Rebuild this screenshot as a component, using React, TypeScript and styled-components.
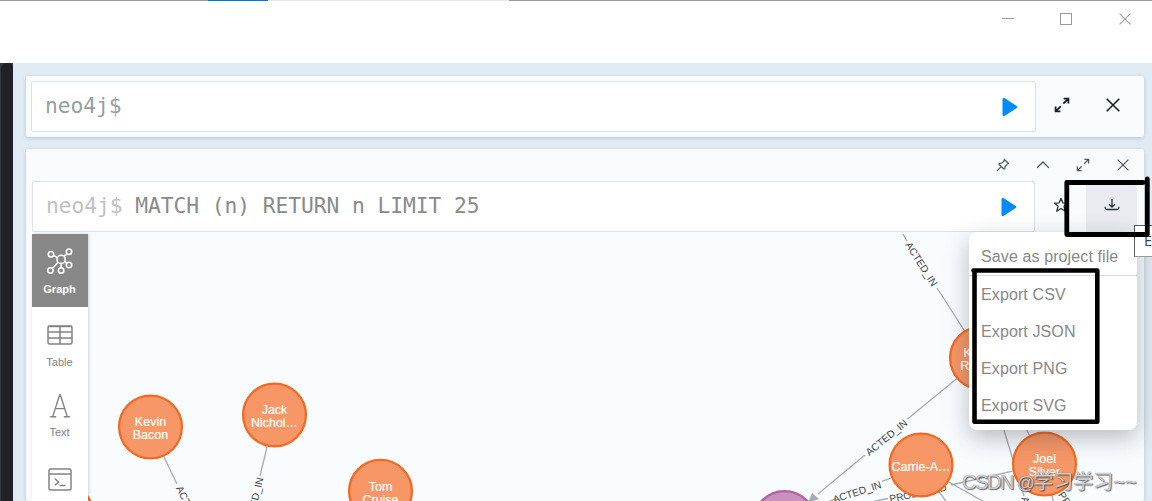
import React from "react";
import styled, { createGlobalStyle, css } from "styled-components";

const GlobalStyle = createGlobalStyle`
  * { box-sizing: border-box; }
  html, body { margin: 0; padding: 0; overflow: hidden; }
  body { font-family: "Liberation Sans", Arial, sans-serif; background: #fff; }
  svg { display: block; flex: none; }
`;

const Window = styled.div`
  position: relative;
  display: flex;
  flex-direction: column;
  width: 1152px;
  height: 501px;
  overflow: hidden;
  background: #fff;
`;

const TopEdge = styled.div`
  display: flex;
  flex: none;
  height: 1px;
`;

const EdgeSegment = styled.div<{ $width: number; $color: string }>`
  width: ${(p) => p.$width}px;
  background: ${(p) => p.$color};
`;

const TitleBar = styled.header`
  display: flex;
  flex: none;
  justify-content: flex-end;
  height: 62px;
  margin-right: -2px;
`;

const WindowButton = styled.button`
  display: flex;
  flex: none;
  align-items: center;
  justify-content: center;
  width: 58px;
  height: 36px;
  padding: 0;
  border: 0;
  background: none;
  color: #999;

  &:not(:last-child) {
    position: relative;
    left: -1px;
  }
`;

const Body = styled.div`
  display: flex;
  flex: 1;
  min-height: 0;
`;

const Rail = styled.div`
  flex: none;
  width: 13px;
  background: #33373d;
  padding-left: 1px;
`;

const RailInner = styled.div`
  height: 100%;
  background: #212227;
  border-radius: 6px 5px 0 0;
`;

const Main = styled.main`
  display: flex;
  flex: 1;
  flex-direction: column;
  gap: 12px;
  min-width: 0;
  padding: 13px 8px 0 13px;
  background: #e1ebf4;
`;

const card = css`
  background: #f8fcff;
  border-radius: 2px;
  box-shadow: 0 1px 4px rgba(0, 0, 0, 0.17);
`;

const EditorCard = styled.section`
  ${card}
  display: flex;
  flex: none;
  height: 61px;
  padding: 5px 0 5px 5px;
`;

const ResultCard = styled.section`
  ${card}
  display: flex;
  flex: 1;
  flex-direction: column;
  min-height: 0;
`;

const EditorBox = styled.div<{ $width: number }>`
  display: flex;
  flex: none;
  align-items: center;
  justify-content: space-between;
  width: ${(p) => p.$width}px;
  height: 51px;
  padding: 0 17px 0 13px;
  border: 1px solid #d8e3ec;
  border-radius: 2px;
  background: #fff;
`;

const Query = styled.div<{ $muted?: boolean }>`
  font: 21.3px/24px "DejaVu Sans Mono", monospace;
  letter-spacing: -0.07px;
  white-space: pre;
  margin-top: -1px;
  color: ${(p) => (p.$muted ? "#95a0a0" : "#8a8a8a")};
`;

const Prompt = styled.span`
  color: #bfc1c2;
`;

const ToolButton = styled.button<{ $active?: boolean; $strong?: boolean }>`
  display: flex;
  flex: none;
  align-items: center;
  justify-content: center;
  width: 51px;
  height: 47px;
  padding: 0;
  border: 0;
  background: ${(p) => (p.$active ? "#eaebf0" : "none")};
  color: ${(p) => (p.$strong ? "#14202b" : "#26333f")};
`;

const FrameHeader = styled.div`
  display: flex;
  flex: none;
  justify-content: flex-end;
  height: 32px;
  padding-right: 1.5px;
`;

const HeaderButton = styled(ToolButton)`
  width: 40px;
  height: 32px;
  color: #4b5965;
`;

const QueryRow = styled.div`
  display: flex;
  flex: none;
  height: 53px;
  padding-left: 6px;
`;

const DownloadSlot = styled.div`
  position: relative;
  padding-top: 4px;
  height: 51px;
`;

const DownloadButton = styled(ToolButton)`
  padding-bottom: 8px;
`;

const Menu = styled.div`
  position: absolute;
  z-index: 3;
  top: 51px;
  right: 0;
  display: flex;
  flex-direction: column;
  width: 168px;
  height: 198px;
  padding-top: 6px;
  border-radius: 8px;
  background: #fff;
  box-shadow: 0 8px 24px rgba(30, 35, 45, 0.3);
`;

const MenuItem = styled.div`
  height: 37px;
  padding-left: 12px;
  font-size: 16px;
  letter-spacing: 0.11px;
  line-height: 37px;
  white-space: nowrap;
  color: #888;
`;

const Divider = styled.div`
  flex: none;
  height: 1px;
  background: #d5dcea;
`;

const FrameBody = styled.div`
  display: flex;
  flex: 1;
  min-height: 0;
  padding-left: 6px;
`;

const Sidebar = styled.nav`
  z-index: 1;
  display: flex;
  flex: none;
  flex-direction: column;
  width: 56px;
  background: #fff;
  box-shadow: 1px 0 3px rgba(0, 0, 0, 0.17);
  overflow: hidden;
`;

const ViewButton = styled.div<{ $active?: boolean; $height: number; $top: number; $gap: number }>`
  display: flex;
  flex: none;
  flex-direction: column;
  align-items: center;
  gap: ${(p) => p.$gap}px;
  height: ${(p) => p.$height}px;
  padding-top: ${(p) => p.$top}px;
  padding-right: 1px;
  background: ${(p) => (p.$active ? "#888" : "#fff")};
  color: ${(p) => (p.$active ? "#fff" : "#828282")};
  font-size: 11px;
  font-weight: ${(p) => (p.$active ? 700 : 400)};
  line-height: 12px;
`;

const GraphPane = styled.div`
  flex: 1;
  min-width: 0;
  overflow: hidden;

  text {
    font-family: "Liberation Sans", Arial, sans-serif;
    text-anchor: middle;
  }
`;

const Tooltip = styled.div`
  position: absolute;
  z-index: 4;
  left: 1134px;
  top: 225px;
  width: 60px;
  height: 32px;
  padding-left: 9px;
  border: 1px solid #5a5a5a;
  border-bottom-color: #999;
  background: #fff;
  color: #3b3b68;
  font: 14.5px/30px "Open Sans", sans-serif;
`;

const Marks = styled.svg`
  position: absolute;
  z-index: 5;
  left: 0;
  top: 0;
  pointer-events: none;
`;

const Watermark = styled.div`
  position: absolute;
  z-index: 6;
  left: 962px;
  top: 470px;
  font: 20px/24px "Liberation Sans", "Noto Sans CJK SC", sans-serif;
  white-space: pre;
  color: rgba(225, 225, 225, 0.85);
  text-shadow: 1px 1px 1px rgba(60, 60, 60, 0.75), 0 0 1px rgba(70, 70, 70, 0.8);
`;

const WatermarkLatin = styled.span`
  letter-spacing: -1.45px;
`;

const WatermarkAt = styled.span`
  font-size: 17.5px;
  letter-spacing: -1.5px;
`;

const Play = () => (
  <svg width="16" height="20" viewBox="0 0 16 20">
    <path d="M1.8 2.2 14 10 1.8 17.8z" fill="#018bff" stroke="#018bff" strokeWidth="2.6" strokeLinejoin="round" />
  </svg>
);

const Expand = ({ weight = 1.4, size = 16 }: { weight?: number; size?: number }) => (
  <svg width={size} height={size} viewBox="0 0 16 16" fill="none" stroke="currentColor" strokeWidth={weight}>
    <path d="M9.3 6.7 14.2 1.8M9.6 1.6h4.8V6.4M6.7 9.3 1.8 14.2M1.6 9.6v4.8H6.4" />
  </svg>
);

const Cross = ({ size = 14, weight = 1.5 }: { size?: number; weight?: number }) => (
  <svg width={size} height={size} viewBox="0 0 14 14" fill="none" stroke="currentColor" strokeWidth={weight}>
    <path d="M.7.7 13.3 13.3M13.3.7.7 13.3" />
  </svg>
);

const Pin = () => (
  <svg width="14" height="14" viewBox="0 0 14 14" fill="none" stroke="currentColor" strokeWidth="1.2" strokeLinejoin="round">
    <path d="M8.4 1.5 12.6 5.5 11.1 6.1 9.2 8.4 8.8 10.8 7.9 11 3 6.2 3.4 5.3 5.8 5.1 8 3ZM5.2 8.6 1 12.8" />
  </svg>
);

const Chevron = () => (
  <svg width="14" height="10" viewBox="0 0 14 10" fill="none" stroke="currentColor" strokeWidth="1.3">
    <path d="M1.2 7.8 7 2l5.8 5.8" />
  </svg>
);

const Star = () => (
  <svg width="16" height="16" viewBox="0 0 16 16" fill="none" stroke="currentColor" strokeWidth="1.3" strokeLinejoin="round">
    <path d="m8 1.3 1.9 4.6 4.8.2-3.8 3.1 1.3 5L8 11.5l-4.2 2.7 1.3-5-3.8-3.1 4.8-.2z" />
  </svg>
);

const Download = () => (
  <svg width="16" height="14" viewBox="0 0 16 14" fill="none" stroke="currentColor" strokeWidth="1.3">
    <path d="M8 1v8M5 6.2l3 3 3-3M1.2 8.7v1.1q0 1.7 1.7 1.7h10.2q1.7 0 1.7-1.7V8.7" />
  </svg>
);

const GraphIcon = () => (
  <svg width="26" height="26" viewBox="0 0 26 26" fill="none" stroke="currentColor" strokeWidth="1.6">
    <circle cx="14.1" cy="11.4" r="4.1" />
    <circle cx="4" cy="6.2" r="2.7" />
    <circle cx="22" cy="3.7" r="2.7" />
    <circle cx="22" cy="17" r="2.7" />
    <circle cx="14.1" cy="22.4" r="2.7" />
    <circle cx="3.4" cy="22.4" r="2.7" />
    <path d="m6.4 7.4 4 2.2M17 8.4l3-2.8M17.7 13.4l2.1 2.1M14.1 15.5v4.2M11.2 14.3l-6 6.2" />
  </svg>
);

const TableIcon = () => (
  <svg width="26" height="20" viewBox="0 0 26 20" fill="none" stroke="currentColor" strokeWidth="1.5">
    <rect x="1" y="1" width="24" height="18" rx="1.5" />
    <path d="M1 7h24M1 13h24M13 1v18M1 1.6h24" />
  </svg>
);

const TextIcon = () => (
  <svg width="22" height="24" viewBox="0 0 22 24" fill="none" stroke="currentColor" strokeWidth="1.4">
    <path d="M3.7 22.6 10.6 1h.8l6.9 21.6M6.3 14.6h9.4M1.2 22.7h6M14.8 22.7h6" />
  </svg>
);

const CodeIcon = () => (
  <svg width="24" height="23" viewBox="0 0 24 23" fill="none" stroke="currentColor" strokeWidth="1.5">
    <rect x="1" y="1" width="22" height="21" rx="1.5" />
    <path d="M1 6h22M6.8 10.7l3.8 3.3-3.8 3.3M11.5 17.5h6" />
  </svg>
);

type NodeProps = { x: number; y: number; lines: string[]; purple?: boolean };

const GraphNode = ({ x, y, lines, purple }: NodeProps) => (
  <g>
    <circle
      cx={x}
      cy={y}
      r={31.4}
      fill={purple ? "#c990c0" : "#f79767"}
      stroke={purple ? "#b261a5" : "#f36924"}
      strokeWidth="2.3"
    />
    {lines.map((line, i) => (
      <text
        key={line}
        x={x}
        y={y + 5.8 + (i - (lines.length - 1) / 2) * 13}
        fontSize="12.5"
        fill="#fff"
        stroke="#fff"
        strokeWidth="0.2"
      >
        {line}
      </text>
    ))}
  </g>
);

type EdgeLabelProps = { x: number; y: number; angle: number; children: string };

const EdgeLabel = ({ x, y, angle, children }: EdgeLabelProps) => (
  <text transform={`translate(${x} ${y}) rotate(${angle})`} y="3.6" fontSize="10.2" fill="#3f4448">
    {children}
  </text>
);

const Graph = () => (
  <svg width="1056" height="267" viewBox="88 234 1056 267">
    <g stroke="#a5abb6" strokeWidth="1.3">
      <path d="M903 234l4 7M937 288l45 70" />
      <path d="M982 358 907.5 419M865 455l-47 39" />
      <path d="M164 457l13 27M267 447l-7 29" />
      <path d="M891 478l-9 3.3M830 501l6-2.4" />
      <path d="M1044 464 951 485M888 498.5l-14 3" />
      <path d="M949 482l37 21M937 489l11 15" />
      <path d="M982 358l42 138M990 358l54 106M1044 464l10 40" />
    </g>
    <path d="M808 503l4-10 7 6z" fill="#a5abb6" />
    <EdgeLabel x={921.5} y={264} angle={57.5}>ACTED_IN</EdgeLabel>
    <EdgeLabel x={886.5} y={437.5} angle={-39.5}>ACTED_IN</EdgeLabel>
    <EdgeLabel x={857} y={492} angle={-18}>ACTED_IN</EdgeLabel>
    <EdgeLabel x={918} y={493} angle={-12}>PRODUCED</EdgeLabel>
    <EdgeLabel x={190} y={509} angle={64}>ACTED_IN</EdgeLabel>
    <EdgeLabel x={254} y={502} angle={-76}>ACTED_IN</EdgeLabel>
    <EdgeLabel x={1032} y={521} angle={73}>ACTED_IN</EdgeLabel>
    <EdgeLabel x={1077} y={517} angle={56}>PRODUCED</EdgeLabel>
    <GraphNode x={62} y={515} lines={[]} />
    <GraphNode x={150.5} y={427} lines={["Kevin", "Bacon"]} />
    <GraphNode x={274.5} y={415} lines={["Jack", "Nichol…"]} />
    <GraphNode x={380.5} y={491.3} lines={["Tom", "Cruise"]} />
    <GraphNode x={981.5} y={358} lines={["Keanu", "Reeves"]} />
    <GraphNode x={784.5} y={522.5} lines={[]} purple />
    <GraphNode x={921} y={465} lines={["Carrie-A…"]} />
    <GraphNode x={1044.5} y={464} lines={["Joel", "Silver"]} />
  </svg>
);

const exportFormats = ["CSV", "JSON", "PNG", "SVG"];

export default function App() {
  return (
    <Window>
      <GlobalStyle />
      <TopEdge>
        <EdgeSegment $width={208} $color="#999" />
        <EdgeSegment $width={60} $color="#0078d7" />
        <EdgeSegment $width={241} $color="#e6e6e6" />
        <EdgeSegment $width={643} $color="#999" />
      </TopEdge>
      <TitleBar>
        <WindowButton aria-label="Minimize">
          <svg width="12" height="12"><path d="M0 5.5h12" stroke="currentColor" /></svg>
        </WindowButton>
        <WindowButton aria-label="Maximize">
          <svg width="12" height="12"><rect x=".5" y=".5" width="11" height="11" fill="none" stroke="currentColor" /></svg>
        </WindowButton>
        <WindowButton aria-label="Close">
          <Cross size={12} weight={1.2} />
        </WindowButton>
      </TitleBar>
      <Body>
        <Rail><RailInner /></Rail>
        <Main>
          <EditorCard>
            <EditorBox $width={1005}>
              <Query $muted>neo4j$</Query>
              <Play />
            </EditorBox>
            <ToolButton $strong aria-label="Expand editor"><Expand weight={1.8} /></ToolButton>
            <ToolButton $strong aria-label="Close editor"><Cross weight={1.6} /></ToolButton>
          </EditorCard>
          <ResultCard>
            <FrameHeader>
              <HeaderButton aria-label="Pin"><Pin /></HeaderButton>
              <HeaderButton aria-label="Collapse"><Chevron /></HeaderButton>
              <HeaderButton aria-label="Expand"><Expand weight={1.5} size={14} /></HeaderButton>
              <HeaderButton aria-label="Close"><Cross size={12} weight={1.5} /></HeaderButton>
            </FrameHeader>
            <QueryRow>
              <EditorBox $width={1003}>
                <Query><Prompt>neo4j$</Prompt> MATCH (n) RETURN n LIMIT 25</Query>
                <Play />
              </EditorBox>
              <ToolButton aria-label="Favorite"><Star /></ToolButton>
              <DownloadSlot>
                <DownloadButton $active aria-label="Download"><Download /></DownloadButton>
                <Menu>
                  <MenuItem>Save as project file</MenuItem>
                  <Divider />
                  {exportFormats.map((format) => (
                    <MenuItem key={format}>Export {format}</MenuItem>
                  ))}
                </Menu>
              </DownloadSlot>
            </QueryRow>
            <FrameBody>
              <Sidebar>
                <ViewButton $active $height={73} $top={14} $gap={9}><GraphIcon />Graph</ViewButton>
                <ViewButton $height={73} $top={18} $gap={11}><TableIcon />Table</ViewButton>
                <ViewButton $height={73} $top={14} $gap={8}><TextIcon />Text</ViewButton>
                <ViewButton $height={73} $top={15} $gap={8}><CodeIcon />Code</ViewButton>
              </Sidebar>
              <GraphPane><Graph /></GraphPane>
            </FrameBody>
          </ResultCard>
        </Main>
      </Body>
      <Tooltip>Export</Tooltip>
      <Marks width="1152" height="501" fill="none" stroke="#000" strokeLinecap="round" strokeLinejoin="round">
        <path d="M1143 182.5H1066.8V234.5H1147M1147.3 179V234.5" strokeWidth="4.8" />
        <path d="M973.5 270.5H1097.3V421.7H974.5V270.5" strokeWidth="4.6" />
      </Marks>
      <Watermark>
        <WatermarkLatin>CSDN </WatermarkLatin>
        <WatermarkAt>@</WatermarkAt>学习学习~~
      </Watermark>
    </Window>
  );
}
